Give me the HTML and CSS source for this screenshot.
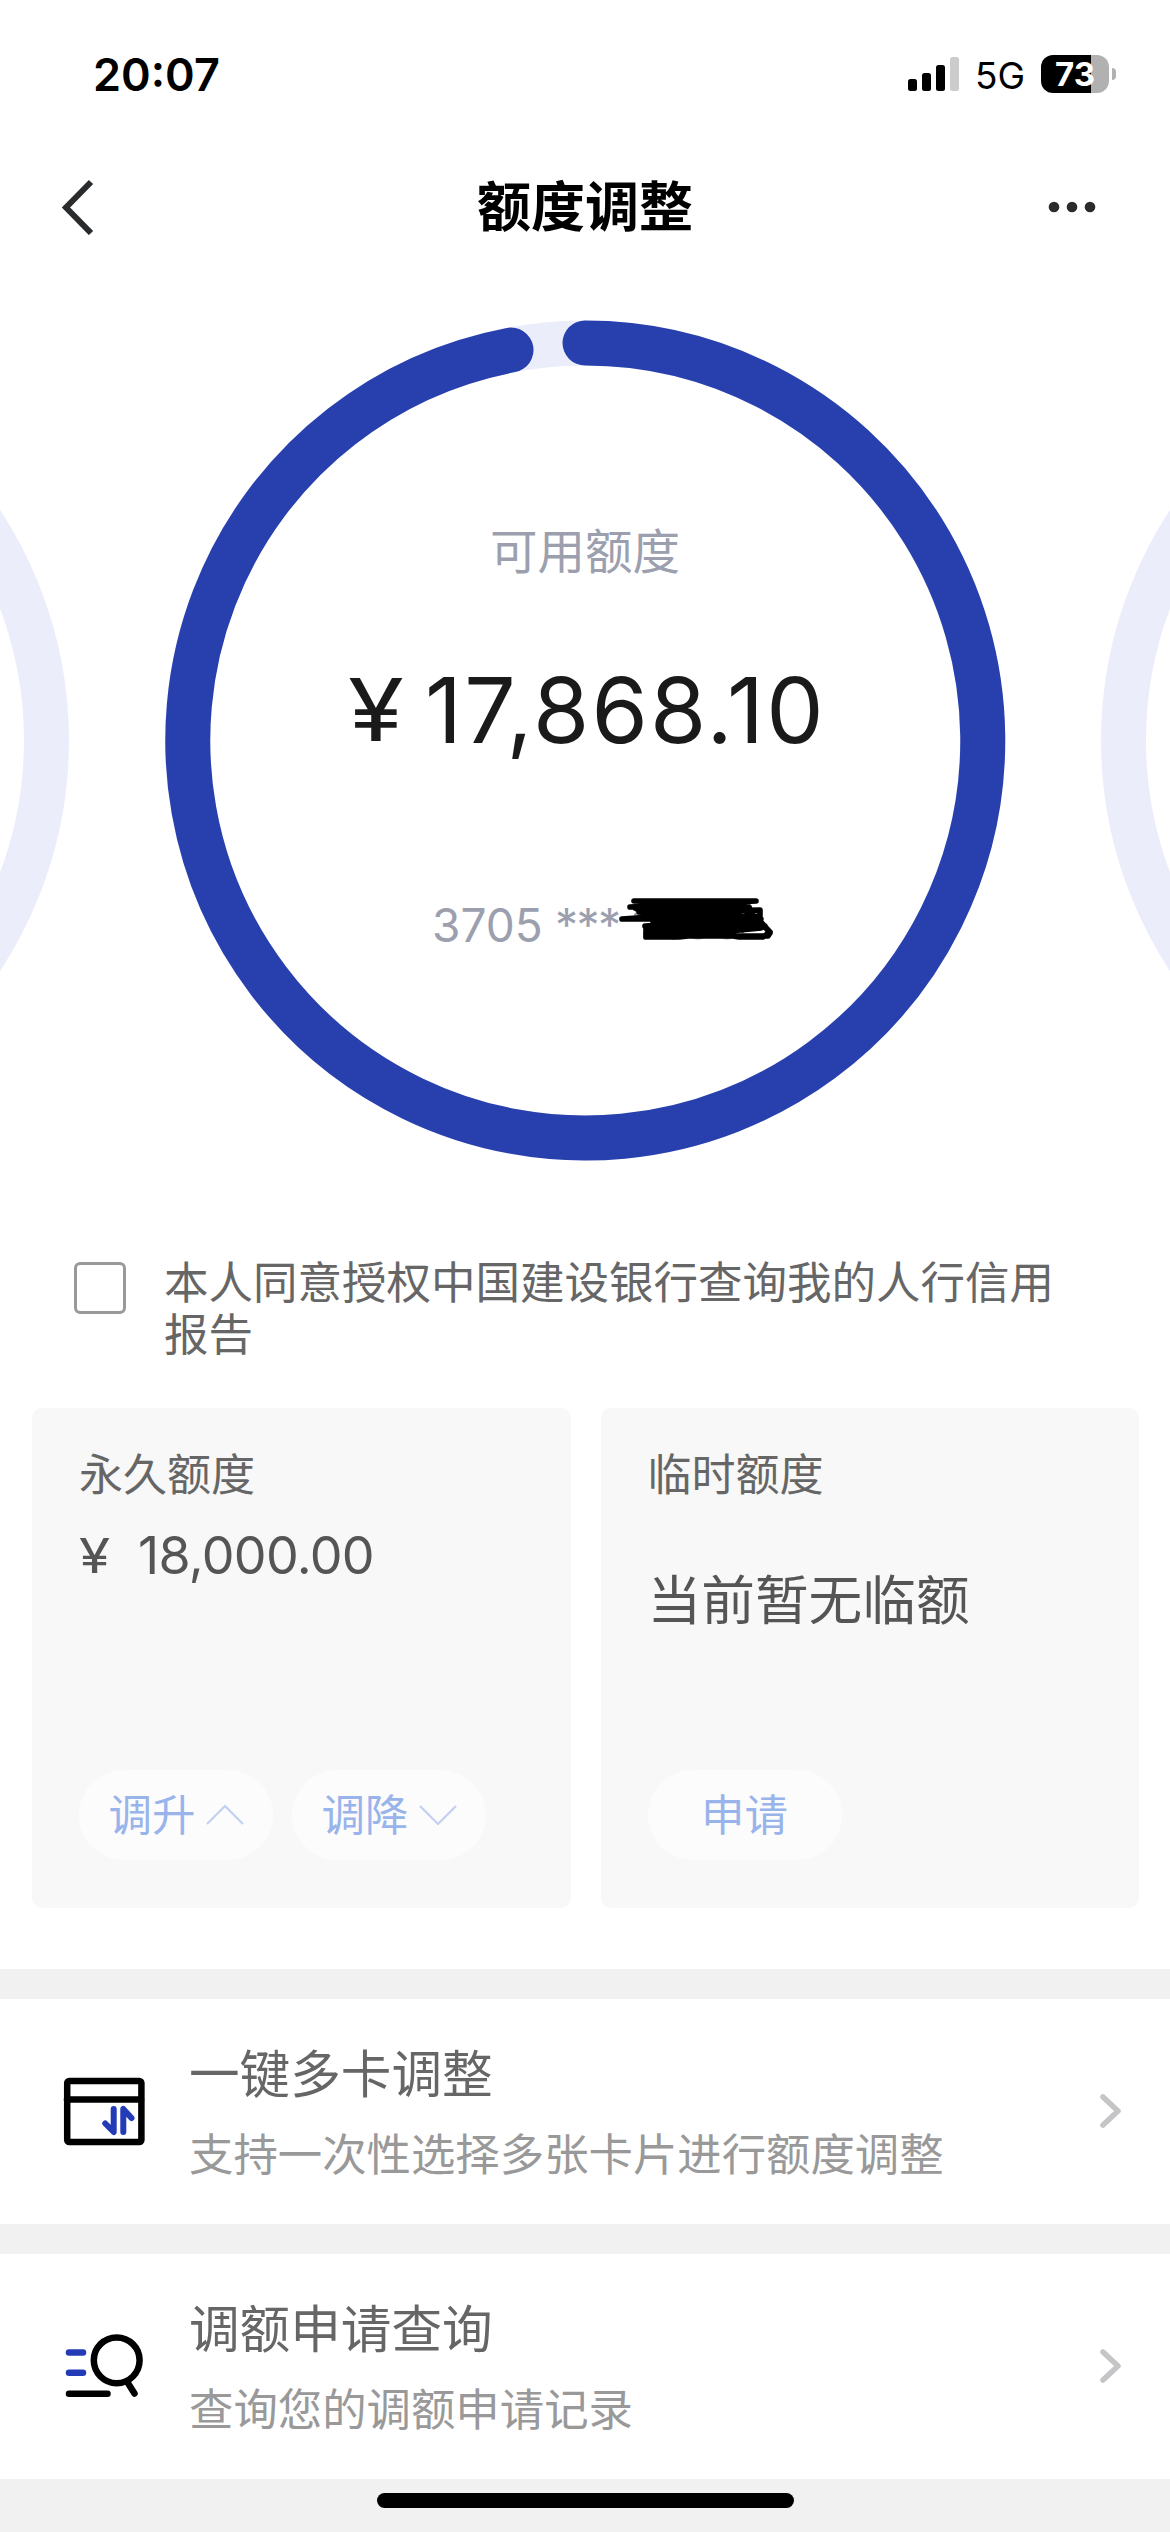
FILE: index.html
```html
<!DOCTYPE html>
<html lang="zh-CN">
<head>
<meta charset="utf-8">
<title>额度调整</title>
<link rel="stylesheet" href="styles.css">
</head>
<body>
<div class="status">
  <span class="time">20:07</span>
  <div class="status-right">
    <svg class="signal" width="51" height="34" viewBox="0 0 51 34">
      <rect x="0" y="22" width="9" height="12" rx="2.5"/>
      <rect x="14" y="16" width="9" height="18" rx="2.5"/>
      <rect x="28" y="8" width="9" height="26" rx="2.5"/>
      <rect x="42" y="0" width="9" height="34" rx="2.5" fill="#ccc"/>
    </svg>
    <span class="network">5G</span>
    <div class="battery"><span>73</span></div>
    <i class="battery-tip"></i>
  </div>
</div>

<header class="nav">
  <svg width="36" height="56" viewBox="0 0 36 56" fill="none" stroke="#2a2b2d" stroke-width="6"><path d="M32 3 7 28.500 32 54"/></svg>
  <h1>额度调整</h1>
  <svg width="48" height="12" viewBox="0 0 48 12" fill="#2a2b2d"><circle cx="6" cy="6" r="5.300"/><circle cx="24" cy="6" r="5.300"/><circle cx="42" cy="6" r="5.300"/></svg>
</header>

<section class="gauge">
  <svg class="rings" width="1170" height="951" viewBox="0 265 1170 951" fill="none" stroke-width="45">
    <g stroke="#ebedfa">
      <circle cx="-351" cy="740.500" r="397.500"/>
      <circle cx="585" cy="740.500" r="397.500"/>
      <circle cx="1521" cy="740.500" r="397.500"/>
    </g>
    <path stroke="#2840ad" stroke-linecap="round" d="M585 343A397.500 397.500 0 1 1 511 350"/>
  </svg>
  <div class="gauge-text">
    <div class="gauge-label">可用额度</div>
    <div class="gauge-amount"><span class="yen">¥</span><span class="num">17,868.10</span></div>
    <div class="gauge-card">
      <span class="card-start">3705</span><span class="stars">***</span>
      <svg class="scribble" width="156" height="50" viewBox="0 0 156 50" fill="none" stroke-linecap="round" stroke-linejoin="round">
        <g stroke="#9c9fae" stroke-width="4"><path d="M17 20 24 15M26 38V43M55 38V43M71 40Q79 45 87 40M100 40Q108 45 116 40"/></g>
        <path stroke="#000" stroke-width="5.600" d="M15 6H137L11 12 128 12 26 18 141 15 141 21 32 22 3 24 142 24 26 31 142 27 151 38 149 41 27 41 27 36 120 32 60 37 146 31M16 13 50 30 60 9 75 35 85 8 100 36 110 8 124 35 130 12 138 28 20 17 120 19 34 27 134 27M27 31V42H60L96 38 120 42H144L151 37 142 27M40 22 122 25M40 36 100 36 142 33 90 38"/>
      </svg>
    </div>
  </div>
</section>

<label class="consent">
  <i class="checkbox"></i>
  <span>本人同意授权中国建设银行查询我的人行信用报告</span>
</label>

<section class="cards">
  <article class="card">
    <h2>永久额度</h2>
    <div class="card-amount"><span class="yen">¥</span><span class="num">18,000.00</span></div>
    <div class="actions">
      <button>调升<svg width="38" height="22" viewBox="0 0 38 22"><path d="M1 20 19 2 37 20"/></svg></button>
      <button>调降<svg width="38" height="22" viewBox="0 0 38 22"><path d="M1 2 19 20 37 2"/></svg></button>
    </div>
  </article>
  <article class="card">
    <h2>临时额度</h2>
    <div class="card-empty">当前暂无临额</div>
    <div class="actions"><button>申请</button></div>
  </article>
</section>

<nav class="menu">
  <a class="row">
    <svg class="row-icon" width="90" height="80" viewBox="60 2072 90 80" fill="none" stroke-width="6.500" stroke-linecap="round" stroke-linejoin="round">
      <rect x="67.200" y="2081" width="74.200" height="61" rx="2" stroke="#000"/>
      <path stroke="#000" d="M67 2099.500H141"/>
      <path fill="#243bb8" stroke="#243bb8" stroke-width="6" d="M105.300 2123.500 113.700 2132V2109 2132ZM131.500 2118 123.300 2109V2132 2109Z"/>
    </svg>
    <div class="row-text"><h3>一键多卡调整</h3><p>支持一次性选择多张卡片进行额度调整</p></div>
    <svg class="chevron" width="24" height="36" viewBox="0 0 24 36"><path d="M4 4 19 18 4 32"/></svg>
  </a>
  <a class="row">
    <svg class="row-icon" width="90" height="80" viewBox="60 2327 90 80" fill="none" stroke-width="6.500" stroke-linecap="round">
      <path stroke="#243bb8" d="M69 2352.400H83M69 2372.700H83"/>
      <g stroke="#000"><path d="M69 2393.700H107.500M128.500 2384 134.500 2393.500"/><circle cx="116.700" cy="2360.300" r="22.900"/></g>
    </svg>
    <div class="row-text"><h3>调额申请查询</h3><p>查询您的调额申请记录</p></div>
    <svg class="chevron" width="24" height="36" viewBox="0 0 24 36"><path d="M4 4 19 18 4 32"/></svg>
  </a>
</nav>
<footer class="home"><i></i></footer>
</body>
</html>
```
FILE: styles.css
```css
* { box-sizing: border-box; }
body {
  margin: 0;
  width: 1170px;
  height: 2532px;
  overflow: hidden;
  display: flex;
  flex-direction: column;
  background: #fff;
  font-family: Inter, "Noto Sans CJK SC", sans-serif;
  color: #666;
}
h1, h2, h3, p { margin: 0; font-weight: 400; }
svg { display: block; flex: none; }

.status {
  height: 148px;
  padding: 0 54px 0 93px;
  display: flex;
  align-items: center;
  justify-content: space-between;
  color: #000;
}
.time { font-size: 45px; font-weight: 600; }
.status-right { display: flex; align-items: center; }
.network { margin-left: 16px; padding-top: 3px; width: 50px; font-size: 37px; }
.battery {
  margin-left: 16px;
  width: 68px;
  height: 38px;
  border-radius: 12px;
  background: linear-gradient(90deg, #000 50px, #b1b1b1 50px);
  color: #fff;
  font-size: 33px;
  font-weight: 700;
  line-height: 38px;
  text-align: center;
}
.battery-tip { margin-left: 3px; width: 4px; height: 12px; border-radius: 0 4px 4px 0; background: #b1b1b1; }

.nav {
  height: 117px;
  padding: 0 74px 0 59px;
  display: grid;
  grid-template-columns: 1fr auto 1fr;
  align-items: center;
}
.nav > :last-child { justify-self: end; }
.nav h1 { margin: 3px 0 0 15px; font-size: 54px; line-height: 70px; font-weight: 600; color: #000; }

.gauge { display: grid; height: 951px; flex: none; }
.rings, .gauge-text { grid-area: 1 / 1; }
.gauge-text { padding-top: 257px; }
.gauge-label { font-size: 47.5px; line-height: 60px; text-align: center; color: #9c9fae; }
.yen { transform: scaleX(1.18); transform-origin: 0 50%; }
.gauge-amount {
  margin-top: 78px;
  padding-left: 348px;
  display: flex;
  font-size: 91px;
  line-height: 100px;
  color: #1a1a1a;
}
.gauge-amount .yen { width: 77px; font-size: 86px; }
.gauge-amount .num { letter-spacing: 2.2px; }
.gauge-card {
  margin-top: 135px;
  padding-left: 432px;
  display: flex;
  font-size: 46px;
  line-height: 60px;
  color: #9c9fae;
}
.card-start { width: 123px; }
.stars { width: 64px; letter-spacing: -1.5px; }

.consent {
  height: 192px;
  padding: 41px 100px 0 74px;
  display: flex;
  gap: 38px;
  font-size: 44.5px;
  line-height: 52px;
}
.checkbox { flex: none; margin-top: 5px; width: 52px; height: 52px; border: 3px solid #999; border-radius: 6px; }

.cards {
  height: 561px;
  padding: 0 31px 61px 32px;
  display: grid;
  grid-template-columns: 1fr 1fr;
  gap: 30px;
}
.card {
  padding: 37px 47px 48px;
  display: flex;
  flex-direction: column;
  border-radius: 10px;
  background: #f8f8f8;
}
.card h2 { font-size: 44px; line-height: 60px; }
.card-amount { margin-top: 21px; display: flex; font-size: 52px; line-height: 60px; color: #555; }
.card-amount .yen { width: 59px; font-size: 48px; }
.card-amount .num { letter-spacing: -0.7px; }
.card-empty { margin-top: 66px; font-size: 53.7px; line-height: 60px; color: #555; }
.actions { margin-top: auto; display: flex; gap: 19px; }
.actions button {
  width: 194px;
  height: 90px;
  padding: 0;
  border: 0;
  border-radius: 45px;
  display: flex;
  align-items: center;
  justify-content: center;
  gap: 10px;
  background: #fcfcfc;
  font: 43.5px/60px Inter, "Noto Sans CJK SC", sans-serif;
  color: #99b3eb;
}
.actions path { fill: none; stroke: #c2d1f3; stroke-width: 2.2px; }

.menu { padding: 30px 0 0; display: flex; flex-direction: column; gap: 30px; background: #f1f1f1; }
.row {
  height: 225px;
  padding: 0 47px 0 60px;
  display: flex;
  background: #fff;
}
.row-icon { margin-top: 73px; }
.row-text { flex: 1; padding: 46px 0 0 39px; display: flex; flex-direction: column; gap: 20px; }
.row h3 { font-size: 50.6px; line-height: 60px; }
.row p { font-size: 44.4px; line-height: 60px; color: #999; }
.chevron { margin-top: 94px; fill: none; stroke: #c5c5c8; stroke-width: 5.5px; stroke-linecap: round; stroke-linejoin: round; }

.home { flex: 1; padding-top: 14px; display: flex; justify-content: center; background: #f1f1f1; }
.home i { width: 417px; height: 15px; border-radius: 8px; background: #000; }
```
